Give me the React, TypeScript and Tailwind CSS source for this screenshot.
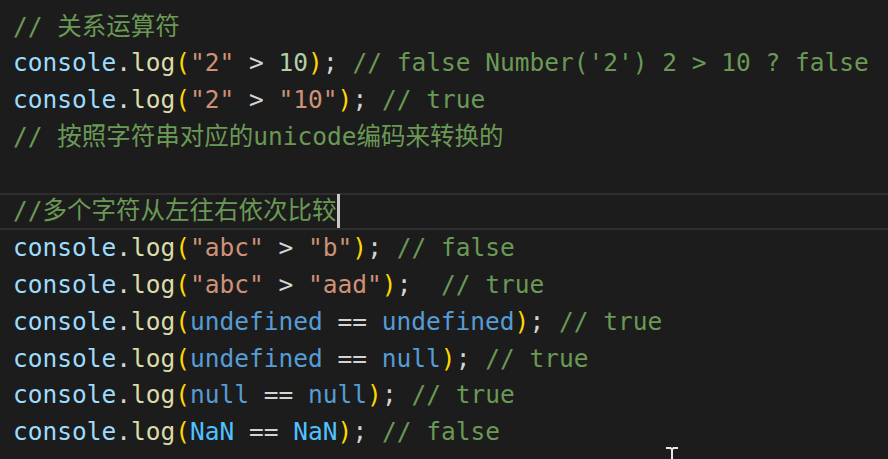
type Tok = [string, string];

const C = {
  cm: "text-[#6a9955]",
  obj: "text-[#9cdcfe]",
  fn: "text-[#dcdcaa]",
  br: "text-[#ffd700]",
  str: "text-[#ce9178]",
  num: "text-[#b5cea8]",
  kw: "text-[#569cd6]",
  nan: "text-[#4fc1ff]",
  p: "text-[#d4d4d4]",
};

const log = (args: Tok[], comment: string): Tok[] => [
  ["console", C.obj],
  [".", C.p],
  ["log", C.fn],
  ["(", C.br],
  ...args,
  [")", C.br],
  [";", C.p],
  [comment, C.cm],
];

const lines: Tok[][] = [
  [["// 关系运算符", C.cm]],
  log([['"2"', C.str], [" > ", C.p], ["10", C.num]], " // false Number('2') 2 > 10 ? false"),
  log([['"2"', C.str], [" > ", C.p], ['"10"', C.str]], " // true"),
  [["// 按照字符串对应的unicode编码来转换的", C.cm]],
  [],
  [["//多个字符从左往右依次比较", C.cm]],
  log([['"abc"', C.str], [" > ", C.p], ['"b"', C.str]], " // false"),
  log([['"abc"', C.str], [" > ", C.p], ['"aad"', C.str]], "  // true"),
  log([["undefined", C.kw], [" == ", C.p], ["undefined", C.kw]], " // true"),
  log([["undefined", C.kw], [" == ", C.p], ["null", C.kw]], " // true"),
  log([["null", C.kw], [" == ", C.p], ["null", C.kw]], " // true"),
  log([["NaN", C.nan], [" == ", C.p], ["NaN", C.nan]], " // false"),
];

export default function App() {
  return (
    <div
      className="relative w-[888px] h-[459px] overflow-hidden bg-[#1c1c1c] pt-[8.5px] text-[24.5px] leading-[36.9px] whitespace-pre"
      style={{ fontFamily: '"DejaVu Sans Mono", "Noto Sans CJK SC", monospace' }}
    >
      {lines.map((line, i) => (
        <div
          key={i}
          className={
            i === 5
              ? "relative h-[36.9px] pl-[13px] border-y-2 border-[#2e2e2e] flex items-center"
              : "h-[36.9px] pl-[13px]"
          }
        >
          {line.map(([t, c], j) => (
            <span key={j} className={c}>
              {t}
            </span>
          ))}
          {i === 5 && <span className="inline-block w-[3px] h-[34px] bg-[#c8c8c8]" />}
        </div>
      ))}
      <svg className="absolute left-[663px] top-[446px]" width="18" height="16" viewBox="0 0 18 16">
        <path d="M3 2 H8 M10 2 H15 M8 2 Q9 3 9 5 V16 M10 2 Q9 3 9 5" stroke="#e8e8e8" strokeWidth="2" fill="none" />
      </svg>
    </div>
  );
}
